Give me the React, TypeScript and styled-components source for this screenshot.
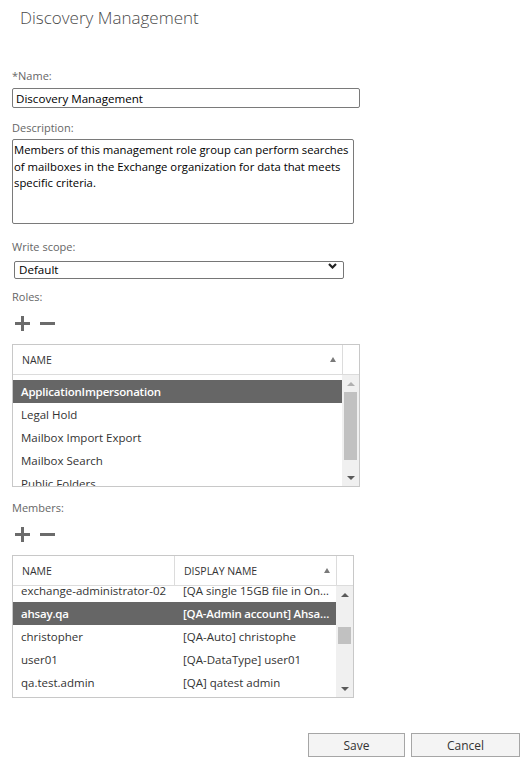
import * as React from 'react';
import styled, { createGlobalStyle } from 'styled-components';

const GlobalStyle = createGlobalStyle`
  html, body {
    margin: 0;
    padding: 0;
    background: #fff;
  }
  body {
    font-family: 'Segoe UI', 'Open Sans', 'Liberation Sans', sans-serif;
    color: #333;
  }
  * {
    box-sizing: border-box;
  }
`;

const Page = styled.div`
  width: 531px;
  height: 769px;
  display: flex;
  flex-direction: column;
  overflow: hidden;
`;

const Title = styled.h1`
  margin: 0;
  padding: 6px 0 0 20px;
  font-size: 17px;
  font-weight: 300;
  line-height: 24px;
  color: #4a4a4a;
`;

const Form = styled.div`
  display: flex;
  flex-direction: column;
  padding-left: 12px;
  margin-top: 38px;
`;

const Label = styled.label<{ $gap: number }>`
  display: block;
  font-size: 11px;
  line-height: 16px;
  color: #666;
  margin-bottom: ${p => p.$gap}px;
`;

const Field = styled.div<{ $after: number }>`
  display: flex;
  flex-direction: column;
  align-items: flex-start;
  margin-bottom: ${p => p.$after}px;
`;

const TextInput = styled.input`
  width: 348px;
  height: 20px;
  padding: 0 3px;
  border: 1px solid #7a7a7a;
  border-radius: 2px;
  font-family: inherit;
  font-size: 11.6px;
  color: #000;
  outline: none;
`;

const TextArea = styled.textarea`
  width: 342px;
  height: 85px;
  padding: 2px 1px 0;
  border: 1px solid #7a7a7a;
  border-radius: 2px;
  font-family: inherit;
  font-size: 11.3px;
  line-height: 16.5px;
  color: #000;
  resize: none;
  overflow: hidden;
  outline: none;
`;

const SelectWrap = styled.div`
  position: relative;
  margin-left: 2px;
  width: 330px;
  height: 18px;
`;

const Select = styled.select`
  appearance: none;
  width: 100%;
  height: 100%;
  padding: 0 0 0 4px;
  border: 1px solid #767676;
  border-radius: 2px;
  background: #fff;
  font-family: inherit;
  font-size: 11.6px;
  color: #000;
  outline: none;
`;

const Chevron = styled.svg`
  position: absolute;
  right: 7px;
  top: 6px;
  pointer-events: none;
`;

const IconRow = styled.div`
  display: flex;
  gap: 10px;
  padding-left: 3px;
  margin-bottom: 13px;
`;

const IconButton = styled.button`
  width: 15px;
  height: 15px;
  padding: 0;
  border: 0;
  background: none;
  display: flex;
`;

const Table = styled.div<{ $width: number; $after: number }>`
  width: ${p => p.$width}px;
  border: 1px solid #c8c8c8;
  margin-bottom: ${p => p.$after}px;
`;

const HeaderRow = styled.div<{ $cols: string }>`
  display: grid;
  grid-template-columns: ${p => p.$cols};
  height: 30px;
  border-bottom: 1px solid #dcdcdc;
`;

const HeaderCell = styled.div`
  display: flex;
  align-items: center;
  justify-content: space-between;
  padding: 0 6px 0 9px;
  border-right: 1px solid #dcdcdc;
  font-size: 10.5px;
  color: #333;
  text-transform: uppercase;
  &:last-child {
    border-right: 0;
  }
`;

const SortArrow = styled.span`
  width: 0;
  height: 0;
  border-left: 3px solid transparent;
  border-right: 3px solid transparent;
  border-bottom: 5px solid #7a7a7a;
`;

const Body = styled.div`
  display: flex;
  height: 111px;
`;

const Viewport = styled.div<{ $offset: number }>`
  flex: 1;
  overflow: hidden;
  padding-top: ${p => p.$offset}px;
`;

const Row = styled.div<{ $cols: string; $selected?: boolean; $shift?: number }>`
  display: grid;
  grid-template-columns: ${p => p.$cols};
  height: 23px;
  line-height: 23px;
  font-size: 11.5px;
  background: ${p => (p.$selected ? '#666' : 'transparent')};
  color: ${p => (p.$selected ? '#fff' : '#333')};
  font-weight: ${p => (p.$selected ? 600 : 400)};
  letter-spacing: ${p => (p.$selected ? '-0.2px' : '0')};
  margin-top: ${p => p.$shift ?? 0}px;
`;

const Cell = styled.div`
  padding: 0 3px 0 8px;
  white-space: nowrap;
  overflow: hidden;
  text-overflow: ellipsis;
`;

const Track = styled.div`
  width: 17px;
  background: #f0f0f0;
  display: flex;
  flex-direction: column;
`;

const ArrowBox = styled.div`
  height: 17px;
  display: flex;
  align-items: center;
  justify-content: center;
`;

const Triangle = styled.span<{ $down?: boolean; $tone: string }>`
  width: 0;
  height: 0;
  border-left: 4px solid transparent;
  border-right: 4px solid transparent;
  ${p => (p.$down ? 'border-top' : 'border-bottom')}: 4px solid ${p => p.$tone};
`;

const Thumb = styled.div<{ $top: number; $height: number }>`
  margin: ${p => p.$top}px 2px 0;
  height: ${p => p.$height}px;
  background: #c1c1c1;
`;

const Fill = styled.div`
  flex: 1;
`;

const Footer = styled.div`
  display: flex;
  justify-content: flex-end;
  gap: 6px;
  padding-right: 11px;
  margin-top: auto;
  margin-bottom: 12px;
`;

const Button = styled.button<{ $width: number }>`
  width: ${p => p.$width}px;
  height: 24px;
  border: 1px solid #a6a6a6;
  background: #f4f4f4;
  font-family: inherit;
  font-size: 12px;
  color: #333;
`;

const PlusIcon = () => (
  <svg width="15" height="15" viewBox="0 0 15 15">
    <rect x="0" y="6" width="15" height="3" fill="#6b6b6b" />
    <rect x="6" y="0" width="3" height="15" fill="#6b6b6b" />
  </svg>
);

const MinusIcon = () => (
  <svg width="15" height="15" viewBox="0 0 15 15">
    <rect x="0" y="6" width="15" height="3" fill="#6b6b6b" />
  </svg>
);

const AddRemove = () => (
  <IconRow>
    <IconButton aria-label="Add"><PlusIcon /></IconButton>
    <IconButton aria-label="Remove"><MinusIcon /></IconButton>
  </IconRow>
);

interface ScrollBarProps {
  top: number;
  height: number;
  upTone: string;
}

const ScrollBar = ({ top, height, upTone }: ScrollBarProps) => (
  <Track>
    <ArrowBox><Triangle $tone={upTone} /></ArrowBox>
    <Thumb $top={top} $height={height} />
    <Fill />
    <ArrowBox><Triangle $down $tone="#5a5a5a" /></ArrowBox>
  </Track>
);

const roles = ['ApplicationImpersonation', 'Legal Hold', 'Mailbox Import Export', 'Mailbox Search', 'Public Folders'];

const members = [
  ['exchange-administrator-02', '[QA single 15GB file in OneDrive] exchange'],
  ['ahsay.qa', '[QA-Admin account] Ahsay QA'],
  ['christopher', '[QA-Auto] christophe'],
  ['user01', '[QA-DataType] user01'],
  ['qa.test.admin', '[QA] qatest admin'],
];

export default function App() {
  return (
    <>
      <GlobalStyle />
      <Page>
        <Title>Discovery Management</Title>
        <Form>
          <Field $after={12}>
            <Label $gap={4}>*Name:</Label>
            <TextInput defaultValue="Discovery Management" />
          </Field>
          <Field $after={15}>
            <Label $gap={3}>Description:</Label>
            <TextArea defaultValue="Members of this management role group can perform searches of mailboxes in the Exchange organization for data that meets specific criteria." />
          </Field>
          <Field $after={14}>
            <Label $gap={2}>Write scope:</Label>
            <SelectWrap>
              <Select defaultValue="Default">
                <option>Default</option>
              </Select>
              <Chevron width="9" height="6" viewBox="0 0 9 6">
                <path d="M1 1 L4.5 4.5 L8 1" stroke="#222" strokeWidth="2.2" fill="none" />
              </Chevron>
            </SelectWrap>
          </Field>

          <Label $gap={11}>Roles:</Label>
          <AddRemove />
          <Table $width={348} $after={13}>
            <HeaderRow $cols="330px 1fr">
              <HeaderCell>Name<SortArrow /></HeaderCell>
              <HeaderCell />
            </HeaderRow>
            <Body>
              <Viewport $offset={5}>
                {roles.map((r, i) => (
                  <Row key={r} $cols="1fr" $selected={i === 0}>
                    <Cell>{r}</Cell>
                  </Row>
                ))}
              </Viewport>
              <ScrollBar top={0} height={68} upTone="#b0b0b0" />
            </Body>
          </Table>

          <Label $gap={11}>Members:</Label>
          <AddRemove />
          <Table $width={342} $after={0}>
            <HeaderRow $cols="162px 162px 1fr">
              <HeaderCell>Name</HeaderCell>
              <HeaderCell>Display Name<SortArrow /></HeaderCell>
              <HeaderCell />
            </HeaderRow>
            <Body>
              <Viewport $offset={0}>
                {members.map(([name, display], i) => (
                  <Row key={name} $cols="162px 162px" $selected={i === 1} $shift={i === 0 ? -7 : 0}>
                    <Cell>{name}</Cell>
                    <Cell>{display}</Cell>
                  </Row>
                ))}
              </Viewport>
              <ScrollBar top={24} height={17} upTone="#5a5a5a" />
            </Body>
          </Table>
        </Form>
        <Footer>
          <Button $width={97}>Save</Button>
          <Button $width={109}>Cancel</Button>
        </Footer>
      </Page>
    </>
  );
}
